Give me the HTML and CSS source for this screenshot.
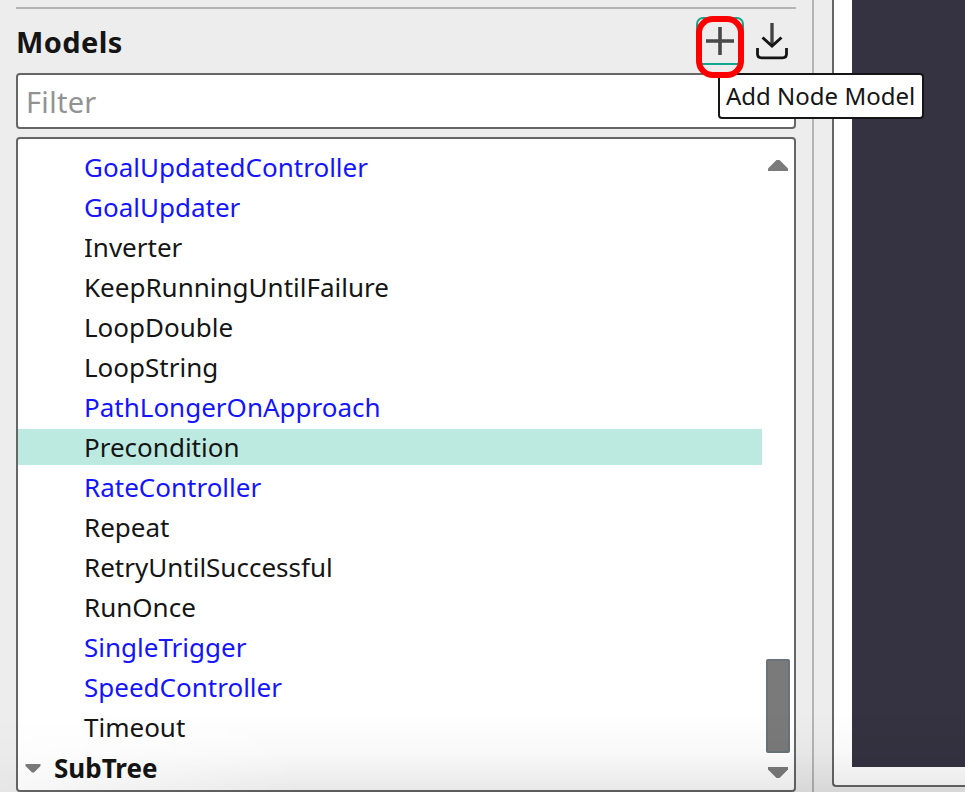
FILE: index.html
```html
<!DOCTYPE html>
<html lang="en">
<head>
<meta charset="utf-8">
<title>Models</title>
<link rel="stylesheet" href="styles.css">
</head>
<body>
<div class="app">
  <aside class="sidebar">
    <header class="header">
      <h1 class="title">Models</h1>
      <div class="add">
        <button class="add-button" aria-label="Add Node Model">
          <svg width="28" height="28" viewBox="0 0 28 28"><path d="M0 14H28M14 0V28" fill="none" stroke="#151515" stroke-opacity=".76" stroke-width="3.6"/></svg>
        </button>
        <span class="ring"></span>
        <div class="tooltip">Add Node Model</div>
      </div>
      <button class="import-button" aria-label="Import">
        <svg width="34" height="38" viewBox="0 0 34 38"><path d="M17 1V23" fill="none" stroke="#444" stroke-width="3.4"/><path d="M7.500 15.500L17 24L26.500 15.500" fill="none" stroke="#151515" stroke-width="3"/><path d="M2.500 26V32Q2.500 35.800 6.500 35.800H27.500Q31.500 35.800 31.500 32V26" fill="none" stroke="#151515" stroke-width="2.800"/></svg>
      </button>
    </header>
    <input class="filter" type="text" placeholder="Filter">
    <div class="list">
      <ul class="rows">
        <li class="row custom">GoalUpdatedController</li>
        <li class="row custom">GoalUpdater</li>
        <li class="row">Inverter</li>
        <li class="row">KeepRunningUntilFailure</li>
        <li class="row">LoopDouble</li>
        <li class="row">LoopString</li>
        <li class="row custom">PathLongerOnApproach</li>
        <li class="row selected">Precondition</li>
        <li class="row custom">RateController</li>
        <li class="row">Repeat</li>
        <li class="row">RetryUntilSuccessful</li>
        <li class="row">RunOnce</li>
        <li class="row custom">SingleTrigger</li>
        <li class="row custom">SpeedController</li>
        <li class="row">Timeout</li>
        <li class="row group"><svg class="caret" width="16" height="9" viewBox="0 0 16 9"><path d="M.5 0H15.500V2L9 8.500H7L.5 2Z" fill="#7c7c7c"/></svg>SubTree</li>
      </ul>
      <div class="scrollbar">
        <svg width="20" height="12" viewBox="0 0 20 12"><path d="M0 12V9.500L8.500 1H11.500L20 9.500V12Z" fill="#7b7b7b"/></svg>
        <div class="thumb"></div>
        <svg width="20" height="12" viewBox="0 0 20 12"><path d="M0 0V2.500L8.500 11H11.500L20 2.500V0Z" fill="#7b7b7b"/></svg>
      </div>
    </div>
  </aside>
  <main class="editor"><div class="canvas"></div></main>
  <div class="shade"></div>
</div>
</body>
</html>
```
FILE: styles.css
```css
* { box-sizing: border-box; }

body {
  margin: 0;
  background: #ededed;
  color: #151515;
  font: 26px/40px "Noto Sans", sans-serif;
}

.app {
  position: relative;
  display: flex;
  height: 792px;
  overflow: hidden;
}

.sidebar {
  display: flex;
  flex-direction: column;
  width: 814px;
  padding: 7px 16px 0;
  border-right: 2px solid #b4b4b4;
}

.header {
  display: flex;
  align-items: flex-start;
  height: 66px;
  border-top: 2px solid #b4b4b4;
}

.title {
  flex: 1;
  margin: 13px 0 0;
  font-size: 29px;
  line-height: 40px;
  letter-spacing: .4px;
}

button {
  padding: 0;
  border: 0;
  background: none;
}

.add {
  position: relative;
  width: 48px;
  height: 57px;
  margin: 8px 11px 0 0;
}

.add-button {
  display: flex;
  align-items: flex-start;
  justify-content: center;
  width: 48px;
  height: 48px;
  padding-top: 8px;
  border: 2px solid #13a88c;
  border-radius: 7px;
}

.ring {
  position: absolute;
  z-index: 3;
  top: -1px;
  left: 0;
  width: 48px;
  height: 62px;
  border: 6px solid #f00;
  border-radius: 17px;
}

.tooltip {
  position: absolute;
  z-index: 2;
  top: 56px;
  left: 22px;
  width: 206px;
  height: 46px;
  padding-left: 6px;
  border: 2px solid #151515;
  border-radius: 4px;
  background: #fff;
  font-size: 24px;
  line-height: 42px;
  white-space: nowrap;
}

.import-button {
  width: 34px;
  height: 38px;
  margin: 13px 7px 0 0;
}

.import-button svg { display: block; }

.filter {
  width: 100%;
  height: 56px;
  padding: 0 8px;
  border: 2px solid #666;
  border-radius: 4px;
  background: #fff;
  font: inherit;
  font-size: 29px;
  letter-spacing: .3px;
}

.filter::placeholder { color: #929292; }

.list {
  display: flex;
  height: 655px;
  margin-top: 8px;
  border: 2px solid #666;
  border-radius: 4px;
  background: #fff;
}

.rows {
  flex: 1;
  margin: 0;
  padding: 8px 0 0;
  list-style: none;
}

.row {
  height: 40px;
  padding-left: 66px;
}

.custom { color: #1414ff; }

.selected {
  background: linear-gradient(#bceae0, #bceae0) 0 2px / 100% 36px no-repeat;
}

.group {
  display: flex;
  align-items: center;
  padding: 2px 0 0 7px;
  font-weight: bold;
}

.caret { margin-right: 13px; }

.scrollbar {
  display: flex;
  flex-direction: column;
  align-items: center;
  width: 32px;
  padding: 20px 0 11px;
}

.thumb {
  width: 24px;
  height: 94px;
  margin: auto 0 14px;
  border: 2px solid #68747c;
  border-radius: 2px;
  background: #7a7a7a;
}

.editor {
  flex: 1;
  height: 787px;
  margin-left: 18px;
  padding: 0 0 18px 18px;
  border: solid #666;
  border-width: 0 0 2px 2px;
  border-radius: 0 0 0 4px;
  background: #fff;
}

.canvas {
  height: 767px;
  background: #353241;
}

.shade {
  position: absolute;
  inset: auto 0 0;
  height: 80px;
  background: linear-gradient(transparent, rgba(0, 0, 0, .025) 50%, rgba(0, 0, 0, .09));
  mask-image: linear-gradient(90deg, rgba(0, 0, 0, .3), #000 300px);
  pointer-events: none;
}
```
